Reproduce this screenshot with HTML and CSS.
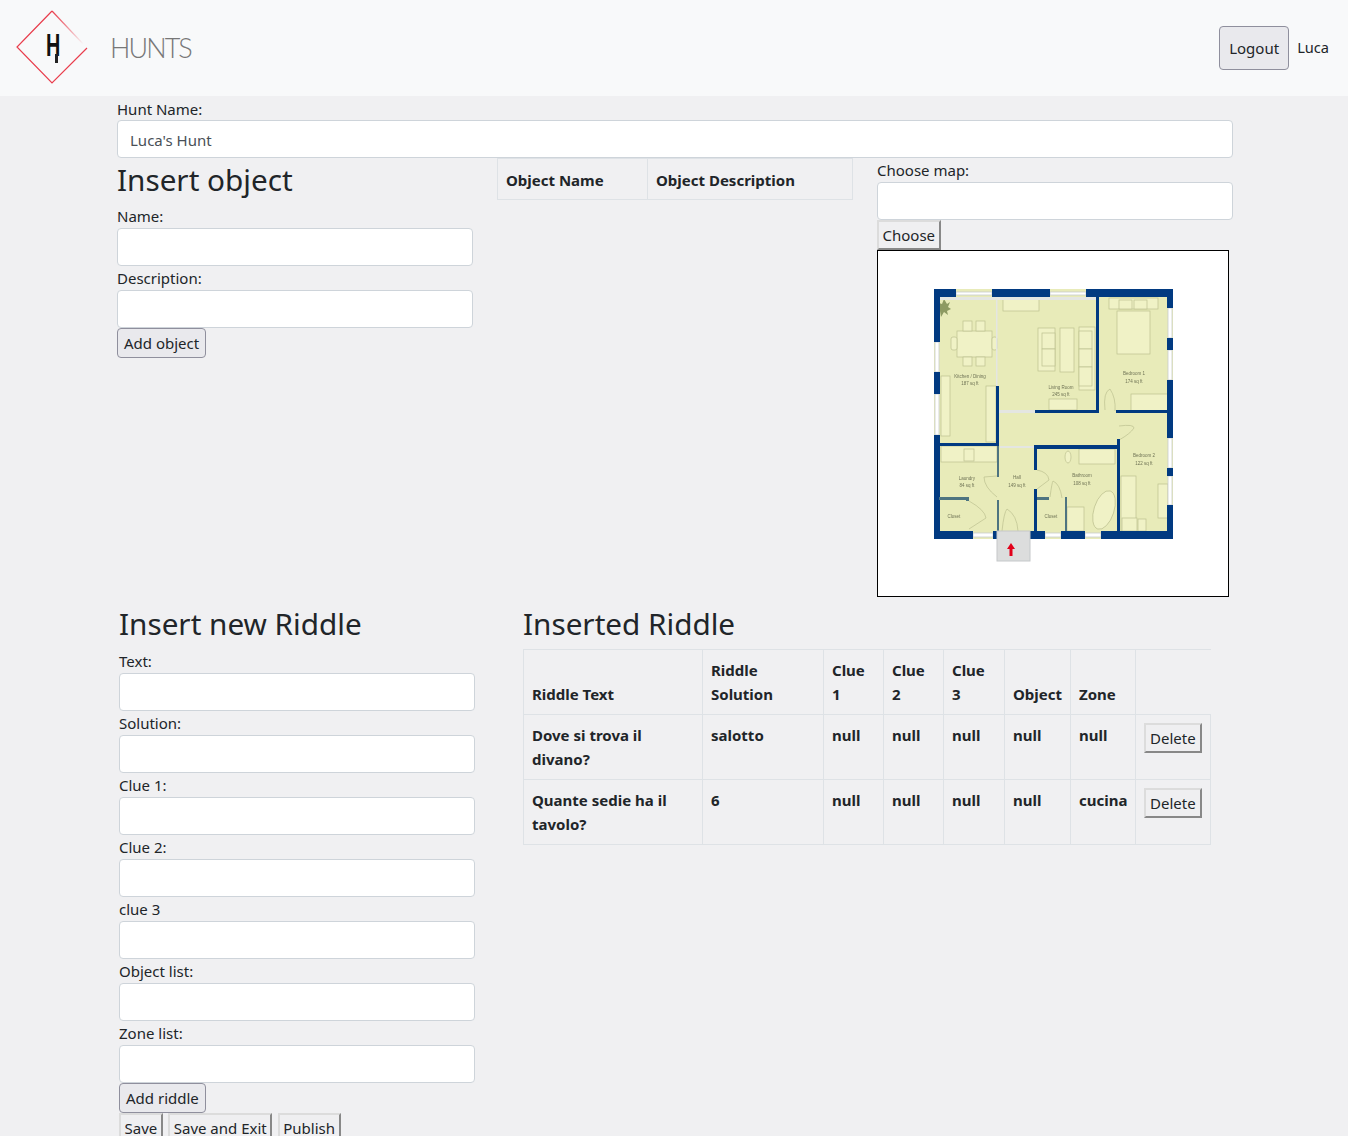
FILE: index.html
```html
<!DOCTYPE html>
<html lang="en">
<head>
  <meta charset="utf-8">
  <title>Hunts</title>
  <link rel="stylesheet" href="styles.css">
</head>
<body>

<nav class="navbar">
  <svg class="logo" width="72" height="74" viewBox="0 0 72 74">
    <defs>
      <linearGradient id="fade" gradientUnits="userSpaceOnUse" x1="36" y1="1" x2="69" y2="36">
        <stop offset="0" stop-color="#e93d4c"/>
        <stop offset=".35" stop-color="#e93d4c" stop-opacity=".7"/>
        <stop offset=".95" stop-color="#e93d4c" stop-opacity="0"/>
      </linearGradient>
    </defs>
    <path class="logo-line" d="M71 38 L36 73 L1 37 L36 1"/>
    <path class="logo-fade" d="M36 1 L69 36"/>
    <text class="logo-h" x="0" y="46" transform="translate(30 0) scale(.62 1)">H</text>
    <rect x="39" y="44" width="3" height="9" fill="#222"/>
  </svg>
  <span class="brand">HUNTS</span>
  <button class="btn btn-logout">Logout</button>
  <span class="username">Luca</span>
</nav>

<div class="page">
  <label class="hunt-label">Hunt Name:</label>
  <input class="field" type="text" value="Luca's Hunt">

  <div class="top-row">
    <div>
      <h2>Insert object</h2>
      <label>Name:</label>
      <input class="field" type="text">
      <label>Description:</label>
      <input class="field" type="text">
      <button class="btn">Add object</button>
    </div>

    <div>
      <table class="objects">
        <tr><th class="col-name">Object Name</th><th>Object Description</th></tr>
      </table>
    </div>

    <div>
      <label>Choose map:</label>
      <input class="field" type="text">
      <button class="btn-old">Choose</button>
      <div class="map">
        <!-- floor plan, coordinates are page pixels -->
        <svg width="352" height="347" viewBox="877 250 352 347">
          <rect x="934" y="289" width="239" height="250" fill="#e8ebb9"/>
          <g fill="#f0f2c6" stroke="#bcc08f" stroke-width=".7">
            <rect x="957" y="331" width="35" height="26"/>
            <rect x="963" y="321" width="9" height="10"/>
            <rect x="976" y="321" width="9" height="10"/>
            <rect x="963" y="357" width="9" height="9"/>
            <rect x="976" y="357" width="9" height="9"/>
            <rect x="951" y="337" width="6" height="13" rx="2"/>
            <rect x="992" y="337" width="5" height="13" rx="2"/>
            <rect x="1003" y="297" width="36" height="14"/>
            <rect x="1038" y="328" width="17" height="43"/>
            <rect x="1042" y="333" width="13" height="16"/>
            <rect x="1042" y="349" width="13" height="17"/>
            <rect x="1060" y="328" width="14" height="44"/>
            <rect x="1079" y="327" width="16" height="63"/>
            <rect x="1079" y="331" width="13" height="18"/>
            <rect x="1079" y="349" width="13" height="18"/>
            <rect x="1079" y="367" width="13" height="19"/>
            <rect x="1049" y="399" width="28" height="11"/>
            <rect x="1109" y="298" width="49" height="11"/>
            <rect x="1119" y="300" width="13" height="9"/>
            <rect x="1134" y="300" width="13" height="9"/>
            <rect x="1117" y="311" width="33" height="43"/>
            <rect x="1131" y="394" width="37" height="17"/>
            <rect x="941" y="376" width="9" height="60"/>
            <rect x="986" y="386" width="10" height="56"/>
            <rect x="941" y="446" width="56" height="16"/>
            <rect x="964" y="449" width="10" height="12"/>
            <rect x="1079" y="449" width="36" height="15"/>
            <rect x="1067" y="507" width="17" height="24"/>
            <rect x="1121" y="476" width="15" height="55"/>
            <rect x="1158" y="484" width="10" height="34"/>
            <rect x="1122" y="518" width="15" height="13"/>
            <rect x="1138" y="519" width="8" height="12"/>
            <ellipse cx="1104" cy="510" rx="10" ry="20" transform="rotate(18 1104 510)"/>
            <ellipse cx="1068" cy="457" rx="3" ry="6"/>
          </g>
          <g fill="none" stroke="#bcc08f" stroke-width=".7">
            <path d="M1105 410 Q1103 392 1110 389 Q1116 398 1115 411"/>
            <path d="M1119 426 Q1134 424 1134 428 Q1130 434 1119 440"/>
            <path d="M984 477 L997 476 M984 477 Q984 487 997 497"/>
            <path d="M969 501 Q985 510 986 518 L969 529"/>
            <path d="M1002 531 Q1004 512 1007 509 Q1017 515 1018 531"/>
            <path d="M1037 470 Q1048 472 1049 480 L1037 489"/>
            <path d="M1050 497 Q1052 482 1053 481 Q1060 484 1062 498"/>
          </g>
          <path d="M944 299 l3 5 l3-2 l-2 5 l3 2 l-4 2 l1 4 l-4-3 l-3 5 l-1-6 l-3-1 l3-3 l-1-4 l3 1z" fill="#8d9a62"/>

          <g fill="#fff" stroke="#c9cccd" stroke-width=".8">
            <rect x="956" y="292" width="36" height="3"/>
            <rect x="1050" y="292" width="36" height="3"/>
            <rect x="935" y="342" width="4" height="30"/>
            <rect x="935" y="394" width="4" height="41"/>
            <rect x="1168" y="308" width="4" height="30"/>
            <rect x="1168" y="350" width="4" height="30"/>
            <rect x="1168" y="438" width="4" height="30"/>
            <rect x="1168" y="476" width="4" height="29"/>
            <rect x="973" y="533" width="20" height="4"/>
            <rect x="1018" y="533" width="8" height="4"/>
            <rect x="1045" y="533" width="16" height="4"/>
            <rect x="1085" y="533" width="16" height="4"/>
          </g>
          <g fill="#e4e6e2">
            <rect x="939" y="297" width="157" height="3"/>
            <rect x="996" y="297" width="1.5" height="89"/>
            <rect x="999" y="410" width="36" height="3"/>
            <rect x="1000" y="446" width="34" height="2"/>
          </g>

          <g fill="#013a81">
            <rect x="934" y="289" width="22" height="8"/>
            <rect x="992" y="289" width="58" height="8"/>
            <rect x="1086" y="289" width="87" height="8"/>
            <rect x="934" y="289" width="6" height="53"/>
            <rect x="934" y="372" width="6" height="22"/>
            <rect x="934" y="435" width="6" height="104"/>
            <rect x="1167" y="289" width="6" height="19"/>
            <rect x="1167" y="338" width="6" height="12"/>
            <rect x="1167" y="380" width="6" height="58"/>
            <rect x="1167" y="468" width="6" height="8"/>
            <rect x="1167" y="505" width="6" height="34"/>
            <rect x="934" y="531" width="39" height="8"/>
            <rect x="993" y="531" width="7" height="8"/>
            <rect x="1026" y="531" width="19" height="8"/>
            <rect x="1061" y="531" width="24" height="8"/>
            <rect x="1101" y="531" width="72" height="8"/>
            <rect x="996" y="386" width="3" height="60"/>
            <rect x="939" y="443" width="60" height="3"/>
            <rect x="1096" y="297" width="3" height="116"/>
            <rect x="1035" y="410" width="64" height="3"/>
            <rect x="1116" y="410" width="52" height="3"/>
            <rect x="1034" y="445" width="85" height="4"/>
            <rect x="1034" y="445" width="3" height="25"/>
            <rect x="1034" y="489" width="3" height="42"/>
            <rect x="1117" y="439" width="3" height="92"/>
          </g>
          <g fill="#4e7480">
            <rect x="939" y="497" width="30" height="3"/>
            <rect x="966" y="497" width="3" height="4"/>
            <rect x="997" y="446" width="2" height="31"/>
            <rect x="997" y="500" width="2" height="31"/>
            <rect x="1037" y="497" width="12" height="3"/>
            <rect x="1065" y="497" width="2" height="34"/>
          </g>

          <rect x="997" y="531" width="33" height="30" fill="#dcdddd" stroke="#c5c8ca"/>
          <path d="M1011 543 l4 6 h-2.5 v7 h-3 v-7 h-2.5z" fill="#e2001a"/>

          <g class="map-text" text-anchor="middle">
            <text x="970" y="378">Kitchen / Dining</text>
            <text x="970" y="385">187 sq ft</text>
            <text x="1061" y="389">Living Room</text>
            <text x="1061" y="396">245 sq ft</text>
            <text x="1134" y="375">Bedroom 1</text>
            <text x="1134" y="383">174 sq ft</text>
            <text x="1144" y="457">Bedroom 2</text>
            <text x="1144" y="465">122 sq ft</text>
            <text x="967" y="480">Laundry</text>
            <text x="967" y="487">84 sq ft</text>
            <text x="1017" y="479">Hall</text>
            <text x="1017" y="487">149 sq ft</text>
            <text x="1082" y="477">Bathroom</text>
            <text x="1082" y="485">108 sq ft</text>
            <text x="954" y="518">Closet</text>
            <text x="1051" y="518">Closet</text>
          </g>
        </svg>
      </div>
    </div>
  </div>

  <div class="bottom-row">
    <div>
      <h2>Insert new Riddle</h2>
      <label>Text:</label>
      <input class="field" type="text">
      <label>Solution:</label>
      <input class="field" type="text">
      <label>Clue 1:</label>
      <input class="field" type="text">
      <label>Clue 2:</label>
      <input class="field" type="text">
      <label>clue 3</label>
      <input class="field" type="text">
      <label>Object list:</label>
      <input class="field" type="text">
      <label>Zone list:</label>
      <input class="field" type="text">
      <button class="btn">Add riddle</button>
      <div class="actions">
        <button class="btn-old">Save</button>
        <button class="btn-old">Save and Exit</button>
        <button class="btn-old">Publish</button>
      </div>
    </div>

    <div>
      <h2>Inserted Riddle</h2>
      <table class="riddles">
        <thead>
          <tr>
            <th class="c-text">Riddle Text</th>
            <th class="c-sol">Riddle Solution</th>
            <th class="c-clue">Clue 1</th>
            <th class="c-clue">Clue 2</th>
            <th class="c-clue3">Clue 3</th>
            <th class="c-obj">Object</th>
            <th class="c-zone">Zone</th>
            <th class="c-del"></th>
          </tr>
        </thead>
        <tbody>
          <tr>
            <td>Dove si trova il divano?</td>
            <td>salotto</td>
            <td>null</td>
            <td>null</td>
            <td>null</td>
            <td>null</td>
            <td>null</td>
            <td><button class="btn-old">Delete</button></td>
          </tr>
          <tr>
            <td>Quante sedie ha il tavolo?</td>
            <td>6</td>
            <td>null</td>
            <td>null</td>
            <td>null</td>
            <td>null</td>
            <td>cucina</td>
            <td><button class="btn-old">Delete</button></td>
          </tr>
        </tbody>
      </table>
    </div>
  </div>
</div>

</body>
</html>
```

FILE: styles.css
```css
html, body {
  height: 1136px;
  overflow: hidden;
}
body {
  font-family: 'Noto Sans', sans-serif;
  font-size: 15px;
  line-height: 24px;
  color: #212529;
  background-color: #f0f0f2;
  margin: 0;
}
.navbar {
  display: flex;
  align-items: center;
  height: 96px;
  padding-left: 16px;
  background-color: #f8f9fa;
}
.logo {
  margin-top: -2px;
}
.logo-line {
  fill: none;
  stroke: #e93d4c;
  stroke-width: 1.2;
}
.logo-fade {
  fill: none;
  stroke: url(#fade);
  stroke-width: 1.2;
}
.logo-h {
  font-family: 'Liberation Sans', sans-serif;
  font-weight: bold;
  font-size: 32px;
  fill: #111;
}
.brand {
  margin-left: 22px;
  font-family: 'Lato', sans-serif;
  font-weight: 300;
  font-size: 27px;
  letter-spacing: -1.9px;
  color: #777;
}
.username {
  margin: 0 19px 2px 8px;
  font-size: 14.6px;
}
.page {
  width: 1116px;
  margin-left: 117px;
}
label {
  display: block;
  line-height: 23px;
  padding-top: 1px;
}
.hunt-label {
  line-height: 22px;
  padding-top: 2px;
}
h2 {
  font-weight: 400;
  font-size: 29.7px;
  line-height: 43px;
  margin: 0 0 3px;
}
.bottom-row h2 {
  line-height: 42px;
  margin-bottom: 4px;
}
.field {
  display: block;
  box-sizing: border-box;
  width: 100%;
  height: 38px;
  padding: 7px 12px 5px;
  font: inherit;
  color: #495057;
  background-color: #fff;
  border: 1px solid #ced4da;
  border-radius: 4px;
}
.btn {
  display: block;
  height: 30px;
  padding: 0 6px;
  font: inherit;
  color: #212529;
  background-color: #e9e9ed;
  border: 1px solid #8f8f9d;
  border-radius: 4px;
}
.btn-logout {
  margin-left: auto;
  height: 44px;
  width: 70px;
}
.btn-old {
  display: block;
  height: 30px;
  padding: 0 3.5px;
  font: inherit;
  font-weight: 400;
  color: #212529;
  background-color: #efeff1;
  border: 2px outset #dcdcdc;
  border-radius: 0;
}
.top-row {
  display: grid;
  grid-template-columns: 356px 356px 356px;
  gap: 24px;
  height: 445px;
}
.objects, .riddles {
  border-collapse: collapse;
  table-layout: fixed;
}
.objects {
  width: 356px;
}
.objects th, .riddles th, .riddles td {
  box-sizing: border-box;
  border: 1px solid #dee2e6;
  padding: 8px;
  text-align: left;
}
.objects th {
  padding: 9px 8px 7px;
}
.col-name {
  width: 150px;
}
.map {
  width: 350px;
  height: 345px;
  background-color: #fff;
  border: 1px solid #000;
}
.map svg {
  display: block;
  margin: -1px;
  filter: blur(.35px);
}
.map-text {
  font-family: 'Liberation Sans', sans-serif;
  font-size: 4.5px;
  fill: #6f7355;
}
.bottom-row {
  display: grid;
  grid-template-columns: 356px 687px;
  gap: 48px;
  padding-left: 2px;
}
.actions {
  display: flex;
  gap: 5.5px;
}
.riddles {
  width: 687px;
}
.riddles th {
  vertical-align: bottom;
}
.riddles td {
  font-weight: bold;
  vertical-align: top;
}
.riddles th:last-child {
  border-right: none;
}
.riddles td .btn-old {
  padding: 0 4px;
}
.c-text { width: 179px; }
.c-sol { width: 121px; }
.c-clue { width: 60px; }
.c-clue3 { width: 61px; }
.c-obj { width: 66px; }
.c-zone { width: 65px; }
.c-del { width: 75px; }
```
